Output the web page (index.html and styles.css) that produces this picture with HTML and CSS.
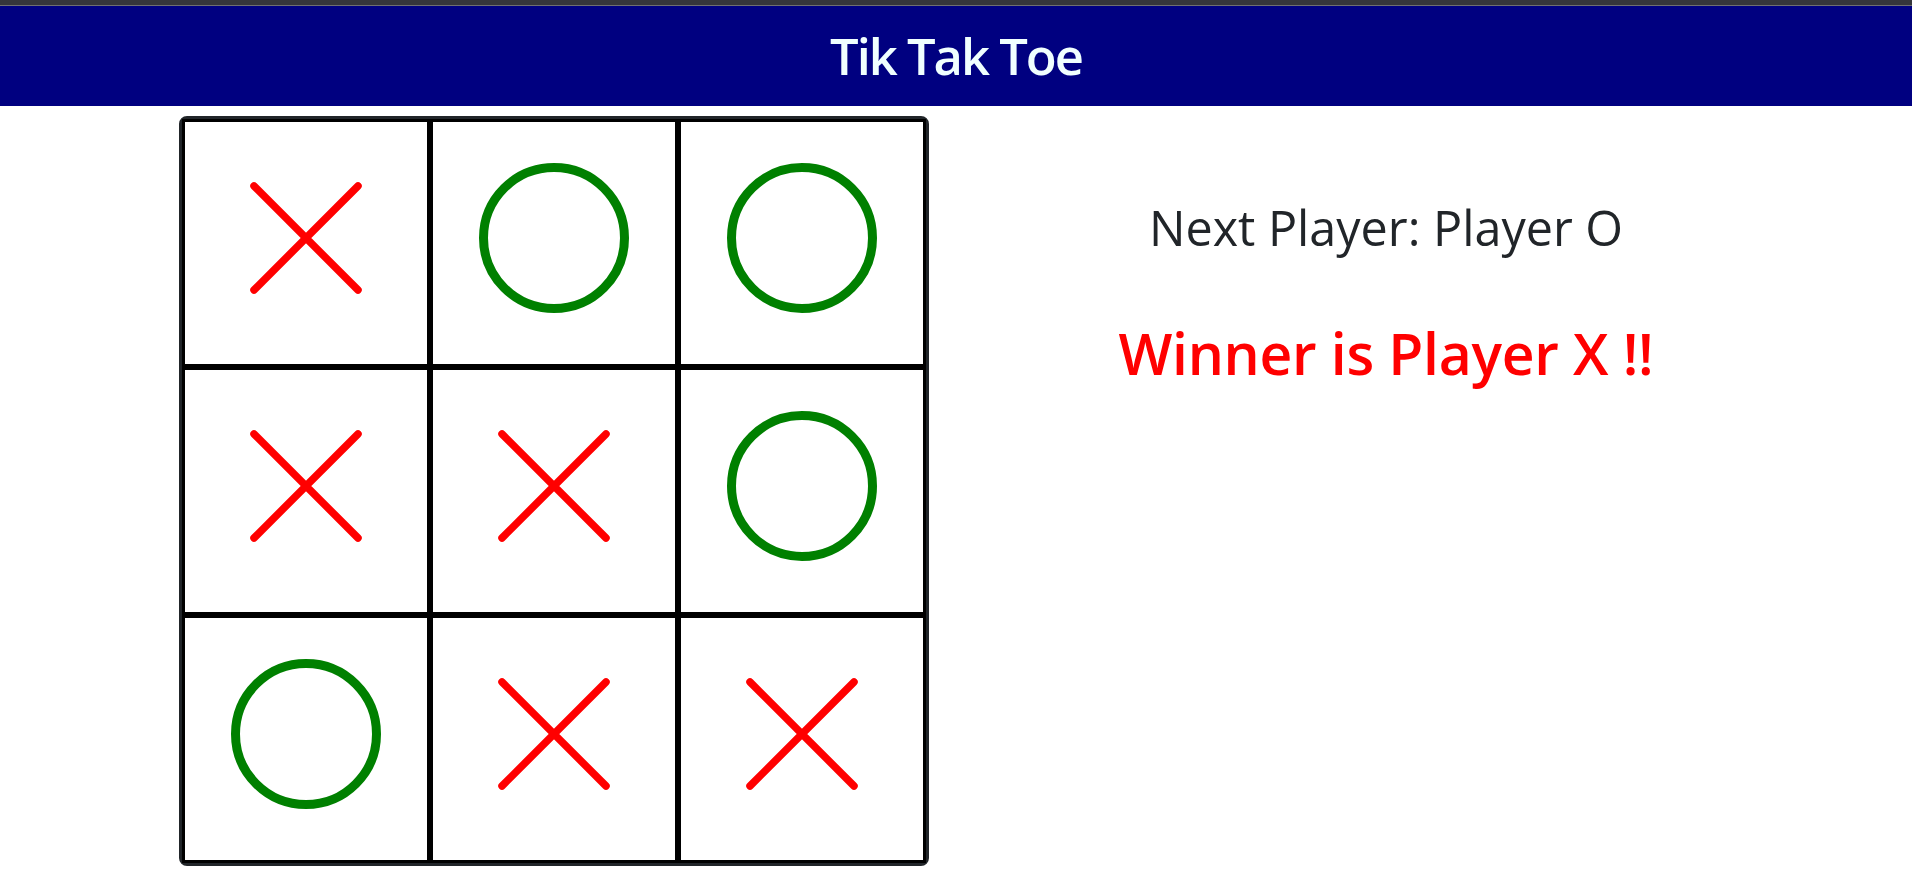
FILE: index.html
```html
<!doctype html>
<html lang="en">
<head>
	<meta charset="utf-8">
	<meta name="viewport" content="width=device-width, initial-scale=1.0">
	<title>Tik Tak Toe</title>
	<link rel="stylesheet" href="styles.css">
</head>
<body>
<div class="topbar"></div>

<header class="header">
	<h1 class="title">Tik Tak Toe</h1>
</header>

<main class="game">
	<div class="board">
		<div class="cell"><svg class="mark" viewBox="0 0 160 160"><path class="x" d="M28 28 L132 132 M132 28 L28 132"/></svg></div>
		<div class="cell"><svg class="mark" viewBox="0 0 160 160"><circle class="o" cx="80" cy="80" r="70.5"/></svg></div>
		<div class="cell"><svg class="mark" viewBox="0 0 160 160"><circle class="o" cx="80" cy="80" r="70.5"/></svg></div>

		<div class="cell"><svg class="mark" viewBox="0 0 160 160"><path class="x" d="M28 28 L132 132 M132 28 L28 132"/></svg></div>
		<div class="cell"><svg class="mark" viewBox="0 0 160 160"><path class="x" d="M28 28 L132 132 M132 28 L28 132"/></svg></div>
		<div class="cell"><svg class="mark" viewBox="0 0 160 160"><circle class="o" cx="80" cy="80" r="70.5"/></svg></div>

		<div class="cell"><svg class="mark" viewBox="0 0 160 160"><circle class="o" cx="80" cy="80" r="70.5"/></svg></div>
		<div class="cell"><svg class="mark" viewBox="0 0 160 160"><path class="x" d="M28 28 L132 132 M132 28 L28 132"/></svg></div>
		<div class="cell"><svg class="mark" viewBox="0 0 160 160"><path class="x" d="M28 28 L132 132 M132 28 L28 132"/></svg></div>
	</div>

	<section class="status">
		<h2 class="next">Next Player: Player O</h2>
		<h2 class="winner">Winner is Player X !!</h2>
	</section>
</main>
</body>
</html>
```

FILE: styles.css
```css
body {
	margin: 0;
	font-family: "Open Sans", "Noto Sans", sans-serif;
	color: #212529;
	background: #fff;
}

.topbar {
	height: 5px;
	background-color: #35363a;
	border-bottom: 1px solid #707070;
}

.header {
	height: 100px;
	background-color: #000080;
	display: flex;
	align-items: center;
	justify-content: center;
}
.title {
	margin: 0;
	font-size: 50.7px;
	font-weight: 600;
	line-height: 1.2;
	letter-spacing: -2px;
	color: azure;
}

.game {
	display: flex;
	align-items: flex-start;
	padding: 10px 0 0 179px;
}

/* board: outer frame + 3px borders on every cell */
.board {
	box-sizing: border-box;
	width: 750px;
	height: 750px;
	border: 3px solid #212529;
	border-radius: 8px;
	display: grid;
	grid-template-columns: repeat(3, 1fr);
	grid-template-rows: repeat(3, 1fr);
}
.cell {
	border: 3px solid #000;
	display: flex;
	align-items: center;
	justify-content: center;
	padding-bottom: 10px;
}
.mark {
	width: 160px;
	height: 160px;
	fill: none;
}
.x {
	stroke: #f00;
	stroke-width: 7.5;
	stroke-linecap: round;
}
.o {
	stroke: #008000;
	stroke-width: 9;
}

.status {
	flex: 1;
	padding-right: 69px;
	text-align: center;
}
.next {
	margin: 82px 0 0;
	font-size: 48.5px;
	font-weight: 400;
	line-height: 1.2;
	letter-spacing: 0;
}
.winner {
	margin: 63px 0 0;
	font-size: 57px;
	font-weight: 600;
	line-height: 1.2;
	letter-spacing: -0.3px;
	color: #f00;
}
```
